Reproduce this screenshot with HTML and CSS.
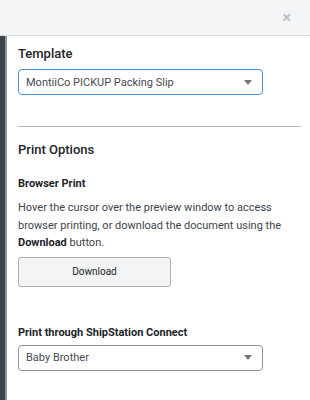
FILE: index.html
```html
<!DOCTYPE html>
<html lang="en">
<head>
    <meta charset="UTF-8">
    <meta name="viewport" content="width=device-width, initial-scale=1.0">
    <title>Print Options</title>
    <link rel="stylesheet" href="styles.css">
</head>
<body>
    <div class="header">
        <span class="close">&times;</span>
    </div>
    <div class="main">
        <div class="side"></div>
        <div class="panel">
            <h2>Template</h2>
            <div class="select focused">
                <span>MontiiCo PICKUP Packing Slip</span>
                <span class="arrow"></span>
            </div>

            <hr class="divider">

            <h2 class="section-title">Print Options</h2>
            <h3>Browser Print</h3>
            <p>Hover the cursor over the preview window to access browser printing, or download the document using the <strong>Download</strong> button.</p>
            <button class="download">Download</button>

            <h3 class="connect-title">Print through ShipStation Connect</h3>
            <div class="select">
                <span>Baby Brother</span>
                <span class="arrow"></span>
            </div>
        </div>
    </div>
</body>
</html>
```

FILE: styles.css
```css
body {
    font-family: Roboto, "Liberation Sans", Arial, sans-serif;
    margin: 0;
    padding: 0;
    width: 310px;
    height: 400px;
    overflow: hidden;
    background: #fff;
    color: #212529;
}

.header {
    height: 35px;
    background: #f4f5f7;
    border-bottom: 1px solid #d3d7dc;
    display: flex;
    align-items: center;
    justify-content: flex-end;
    padding-right: 19px;
}

.close {
    color: #b9c1ca;
    font-size: 16px;
    font-weight: 700;
    line-height: 1;
}

.main {
    display: flex;
    height: 364px;
}

.side {
    width: 5px;
    background: #3f4449;
    border-right: 2px solid #90969c;
}

.panel {
    flex: 1;
    padding: 10px 9px 0 11px;
}

h2 {
    font-size: 13px;
    font-weight: 500;
    line-height: 16px;
    margin: 0 0 7px;
    color: #212529;
}

.select {
    width: 245px;
    height: 26px;
    box-sizing: border-box;
    border: 1px solid #8a929b;
    border-radius: 4px;
    display: flex;
    align-items: center;
    justify-content: space-between;
    padding: 0 10px 0 7px;
    font-size: 11px;
    color: #454b52;
}

.select.focused {
    border-color: #4a90d9;
}

.arrow {
    width: 0;
    height: 0;
    border-left: 4px solid transparent;
    border-right: 4px solid transparent;
    border-top: 5px solid #6f767e;
}

.divider {
    border: none;
    border-top: 1px solid #b1bcc7;
    margin: 31px 0 15px;
}

.section-title {
    margin-bottom: 19px;
}

h3 {
    font-size: 11px;
    font-weight: 700;
    line-height: 14px;
    margin: 0 0 8px;
    color: #212529;
}

p {
    font-size: 11px;
    line-height: 17.5px;
    margin: 0 0 5px;
    color: #3e444a;
}

p strong {
    color: #212529;
}

.download {
    width: 153px;
    height: 30px;
    background: #f3f4f6;
    border: 1px solid #a9afb5;
    border-radius: 3px;
    font-family: inherit;
    font-size: 10px;
    color: #212529;
    cursor: pointer;
}

.connect-title {
    margin-top: 39px;
    margin-bottom: 5px;
}
```
